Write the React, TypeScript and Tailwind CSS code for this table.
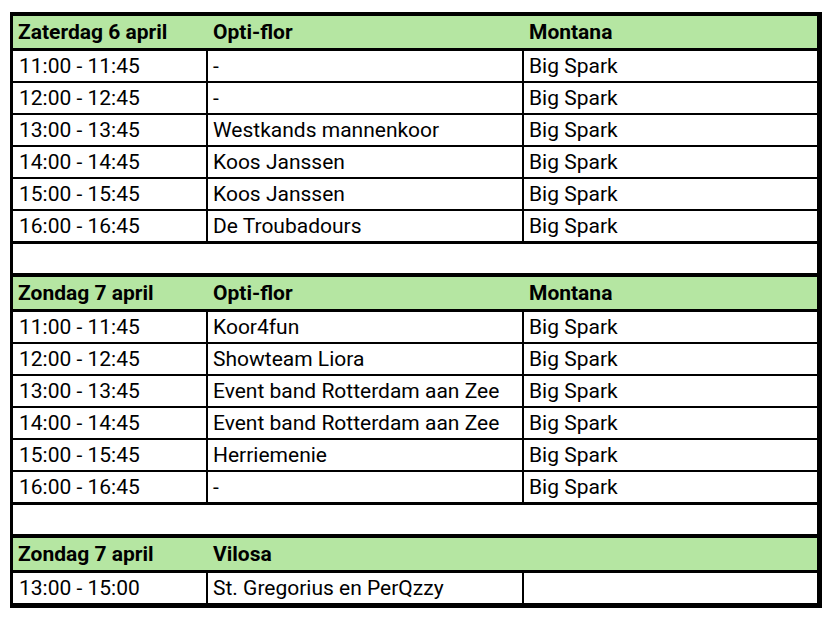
import React from "react";

type Row = [string, string, string];

const sections: { title: [string, string, string]; rows: Row[]; empty: boolean }[] = [
  {
    title: ["Zaterdag 6 april", "Opti-flor", "Montana"],
    rows: [
      ["11:00 - 11:45", "-", "Big Spark"],
      ["12:00 - 12:45", "-", "Big Spark"],
      ["13:00 - 13:45", "Westkands mannenkoor", "Big Spark"],
      ["14:00 - 14:45", "Koos Janssen", "Big Spark"],
      ["15:00 - 15:45", "Koos Janssen", "Big Spark"],
      ["16:00 - 16:45", "De Troubadours", "Big Spark"],
    ],
    empty: true,
  },
  {
    title: ["Zondag 7 april", "Opti-flor", "Montana"],
    rows: [
      ["11:00 - 11:45", "Koor4fun", "Big Spark"],
      ["12:00 - 12:45", "Showteam Liora", "Big Spark"],
      ["13:00 - 13:45", "Event band Rotterdam aan Zee", "Big Spark"],
      ["14:00 - 14:45", "Event band Rotterdam aan Zee", "Big Spark"],
      ["15:00 - 15:45", "Herriemenie", "Big Spark"],
      ["16:00 - 16:45", "-", "Big Spark"],
    ],
    empty: true,
  },
  {
    title: ["Zondag 7 april", "Vilosa", ""],
    rows: [["13:00 - 15:00", "St. Gregorius en PerQzzy", ""]],
    empty: false,
  },
];

const grid = "grid grid-cols-[195px_316px_1fr]";

export default function App() {
  return (
    <div
      className="w-[836px] h-[618px] bg-white pt-[12px] pl-[10px]"
      style={{ fontFamily: "Roboto, 'Liberation Sans', sans-serif" }}
    >
      <div className="w-[812px] border-black border-l-[3px] border-r-[5px] border-t-[4px] border-b-[5px] flex flex-col text-[21px] text-black leading-none">
        {sections.map((s, si) => (
          <div key={si} className="flex flex-col">
            <div className={`${grid} h-[35px] bg-[#b5e6a2] border-b-[3px] border-black font-bold items-center`}>
              <div className="pl-[5px]">{s.title[0]}</div>
              <div className="pl-[5px]">{s.title[1]}</div>
              <div className="pl-[5px]">{s.title[2]}</div>
            </div>
            {s.rows.map((r, ri) => {
              const last = ri === s.rows.length - 1;
              const border = last
                ? s.empty
                  ? "h-[33px] border-b-[3px]"
                  : "h-[30px]"
                : "h-[32px] border-b-[2px]";
              return (
                <div key={ri} className={`${grid} ${border} border-black`}>
                  <div className="pl-[6px] pt-[1px] border-r-[2px] border-black flex items-center">{r[0]}</div>
                  <div className="pl-[5px] pt-[1px] border-r-[2px] border-black flex items-center">{r[1]}</div>
                  <div className="pl-[5px] pt-[1px] flex items-center">{r[2]}</div>
                </div>
              );
            })}
            {s.empty && <div className="h-[33px] border-b-[4px] border-black" />}
          </div>
        ))}
      </div>
    </div>
  );
}
